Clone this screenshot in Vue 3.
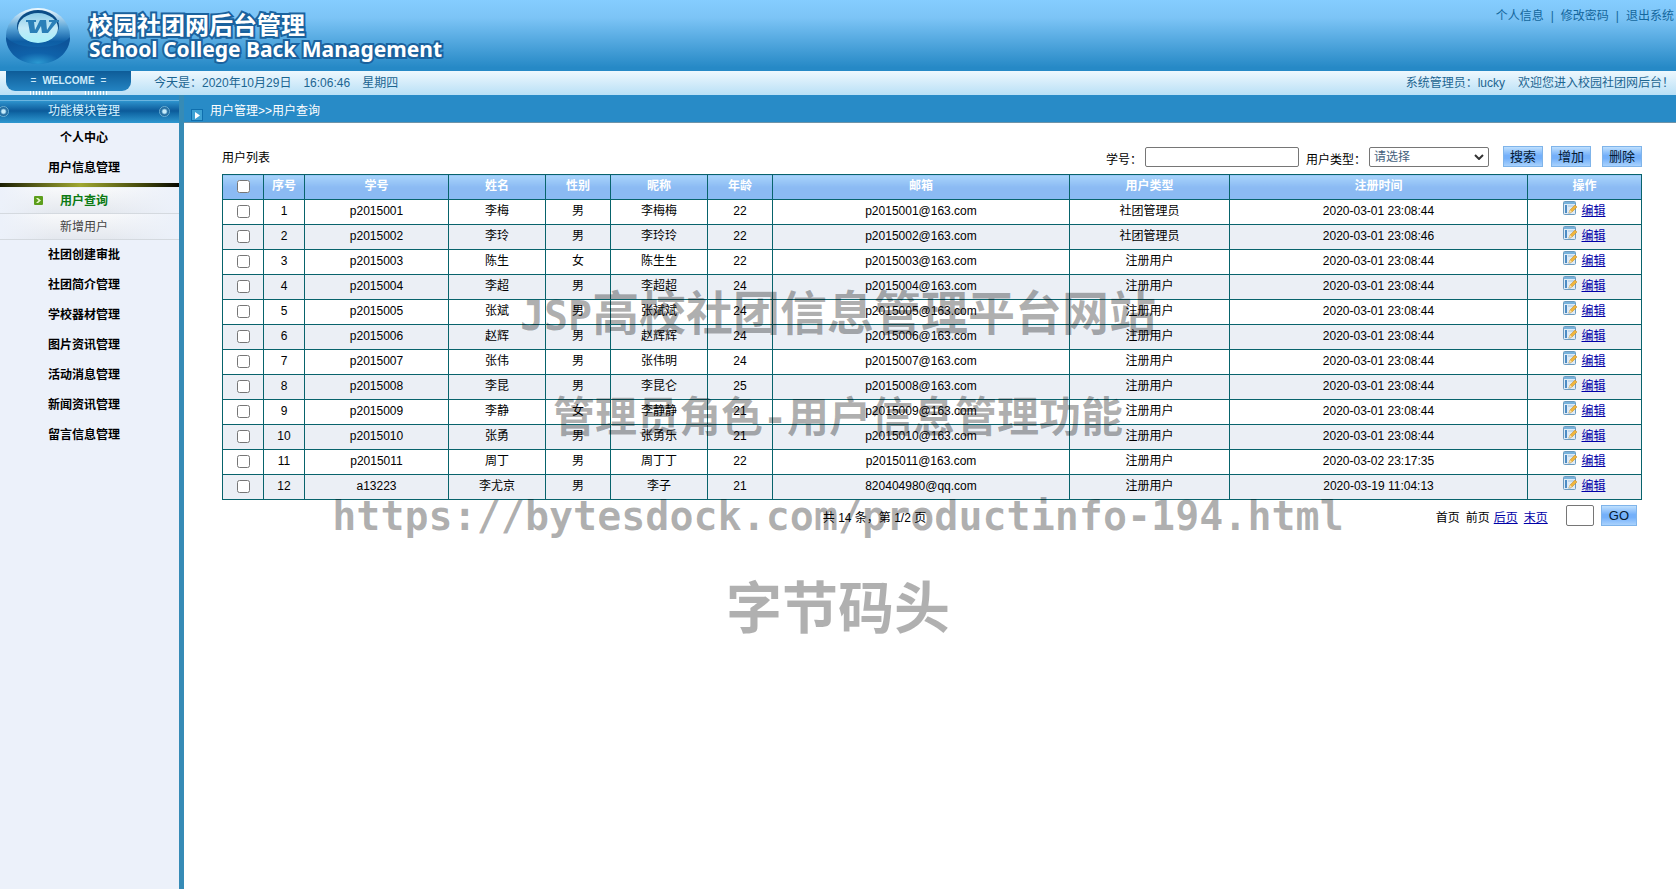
<script setup>
import { ref } from 'vue'

const sections = ['社团创建审批', '社团简介管理', '学校器材管理', '图片资讯管理', '活动消息管理', '新闻资讯管理', '留言信息管理']
const columns = ['序号', '学号', '姓名', '性别', '昵称', '年龄', '邮箱', '用户类型', '注册时间', '操作']
const widths = ['w-s', 'w-s', 'w-id', 'w-name', 'w-age', 'w-name', 'w-age', 'w-mail', 'w-type', 'w-time', 'w-op']

const users = [
  ['p2015001', '李梅', '男', '李梅梅', 22, 'p2015001@163.com', '社团管理员', '2020-03-01 23:08:44'],
  ['p2015002', '李玲', '男', '李玲玲', 22, 'p2015002@163.com', '社团管理员', '2020-03-01 23:08:46'],
  ['p2015003', '陈生', '女', '陈生生', 22, 'p2015003@163.com', '注册用户', '2020-03-01 23:08:44'],
  ['p2015004', '李超', '男', '李超超', 24, 'p2015004@163.com', '注册用户', '2020-03-01 23:08:44'],
  ['p2015005', '张斌', '男', '张斌斌', 24, 'p2015005@163.com', '注册用户', '2020-03-01 23:08:44'],
  ['p2015006', '赵辉', '男', '赵辉辉', 24, 'p2015006@163.com', '注册用户', '2020-03-01 23:08:44'],
  ['p2015007', '张伟', '男', '张伟明', 24, 'p2015007@163.com', '注册用户', '2020-03-01 23:08:44'],
  ['p2015008', '李昆', '男', '李昆仑', 25, 'p2015008@163.com', '注册用户', '2020-03-01 23:08:44'],
  ['p2015009', '李静', '女', '李静静', 21, 'p2015009@163.com', '注册用户', '2020-03-01 23:08:44'],
  ['p2015010', '张勇', '男', '张勇乐', 21, 'p2015010@163.com', '注册用户', '2020-03-01 23:08:44'],
  ['p2015011', '周丁', '男', '周丁丁', 22, 'p2015011@163.com', '注册用户', '2020-03-02 23:17:35'],
  ['a13223', '李尤京', '男', '李子', 21, '820404980@qq.com', '注册用户', '2020-03-19 11:04:13']
]

const keyword = ref('')
const userType = ref('')
const page = ref('')
</script>

<template>
  <div class="app">
    <header class="banner">
      <svg class="logo" viewBox="0 0 66 60" aria-hidden="true">
        <defs>
          <linearGradient id="rim" x1="0" y1="0" x2="0" y2="1">
            <stop offset="0" stop-color="#f2fbff" />
            <stop offset="0.35" stop-color="#5aa5d8" />
            <stop offset="0.6" stop-color="#0d5da4" />
            <stop offset="1" stop-color="#1c7cc0" />
          </linearGradient>
          <radialGradient id="ball" cx="0.5" cy="0.95" r="0.8">
            <stop offset="0" stop-color="#2b98d0" />
            <stop offset="0.45" stop-color="#0f62aa" />
            <stop offset="1" stop-color="#0d559b" />
          </radialGradient>
          <linearGradient id="glass" x1="0" y1="0" x2="0" y2="1">
            <stop offset="0" stop-color="#8ccbe8" />
            <stop offset="0.5" stop-color="#c3e9f7" />
            <stop offset="1" stop-color="#a5f0fa" />
          </linearGradient>
        </defs>
        <ellipse cx="32" cy="29" rx="32" ry="28" fill="url(#rim)" />
        <path d="M0 30C6 37 18 40 32 40s26-3 32-10c0 16-14 27-32 27S0 46 0 30z" fill="url(#ball)" />
        <ellipse cx="32" cy="19" rx="21" ry="16" fill="#0b4c86" />
        <ellipse cx="32" cy="21" rx="20" ry="15" fill="url(#glass)" />
        <path d="M20 13h10v2h-2l1 8 5-10h6l1 10 5-8h-3v-2h10v2h-2l-9 11h-6l-1-7-4 7h-7l-2-11h-2z" fill="#2a7fb8" />
      </svg>
      <div class="brand">
        <h1>校园社团网后台管理</h1>
        <p>School College Back Management</p>
      </div>
      <nav class="account">
        <a href="#">个人信息</a><span>|</span><a href="#">修改密码</a><span>|</span><a href="#">退出系统</a>
      </nav>
    </header>

    <div class="infobar">
      <div class="welcome"><span>=</span><b>WELCOME</b><span>=</span></div>
      <div class="clock"><span>今天是：2020年10月29日</span><span>16:06:46</span><span>星期四</span></div>
      <div class="greeting"><span>系统管理员：lucky</span><span>欢迎您进入校园社团网后台！</span></div>
    </div>

    <div class="body">
      <aside class="sidebar">
        <h2><i class="knob"></i><span>功能模块管理</span><i class="knob"></i></h2>
        <nav class="menu">
          <a class="item" href="#">个人中心</a>
          <a class="item" href="#">用户信息管理</a>
          <div class="submenu">
            <a class="sub active" href="#">
              <svg class="arrow" viewBox="0 0 9 9" aria-hidden="true">
                <rect width="9" height="9" rx="1" fill="#5c9e1c" />
                <path d="M2 2h2l3 2.500-3 2.500h-2l2.500-2.500z" fill="#e8f8c8" />
              </svg>用户查询</a>
            <a class="sub" href="#">新增用户</a>
          </div>
          <a v-for="s in sections" :key="s" class="item" href="#">{{ s }}</a>
        </nav>
      </aside>

      <main class="main">
        <div class="crumb">
          <svg viewBox="0 0 12 12" aria-hidden="true">
            <rect width="12" height="12" fill="#0f6fae" />
            <rect x="1" y="1" width="10" height="10" fill="#3ea2d4" />
            <path d="M4 3l5 3.500-5 3.500z" fill="#fff" />
          </svg>
          <span>用户管理&gt;&gt;用户查询</span>
        </div>

        <section class="content">
          <form class="toolbar" @submit.prevent>
            <span class="caption">用户列表</span>
            <label for="keyword">学号：</label>
            <input id="keyword" v-model="keyword" type="text">
            <label for="type" class="type-label">用户类型：</label>
            <select id="type" v-model="userType">
              <option value="">请选择</option>
              <option>社团管理员</option>
              <option>注册用户</option>
            </select>
            <div class="actions">
              <button type="submit">搜索</button>
              <button type="button">增加</button>
              <button type="button" class="remove">删除</button>
            </div>
          </form>

          <table>
            <colgroup><col v-for="(w, i) in widths" :key="i" :class="w"></colgroup>
            <thead>
              <tr>
                <th><input type="checkbox" aria-label="全选"></th>
                <th v-for="c in columns" :key="c">{{ c }}</th>
              </tr>
            </thead>
            <tbody>
              <tr v-for="(u, i) in users" :key="u[0]">
                <td><input type="checkbox" :aria-label="u[0]"></td>
                <td>{{ i + 1 }}</td>
                <td v-for="(v, j) in u" :key="j">{{ v }}</td>
                <td>
                  <div class="edit">
                    <svg viewBox="0 0 14 14" aria-hidden="true">
                      <rect x="0.500" y="0.500" width="12" height="13" rx="1" fill="#dfebf6" stroke="#6d9cc0" />
                      <path d="M1 2h11" stroke="#79b3dc" stroke-width="2" />
                      <path d="M3 4v8" stroke="#4d8cc4" stroke-width="2" />
                      <path d="M5 5h6M5 12h3" stroke="#9fc4e0" />
                      <path d="M6 12l1-3 5-5 2 2-5 5z" fill="#f0b63c" stroke="#b9862c" stroke-width="0.500" />
                      <path d="M6 12l1-3 2 2z" fill="#f6e3b8" />
                    </svg>
                    <a href="#">编辑</a>
                  </div>
                </td>
              </tr>
            </tbody>
          </table>

          <form class="pager" @submit.prevent>
            <span class="total">共 14 条，第 1/2 页</span>
            <div class="pages"><span>首页</span><span>前页</span><a href="#">后页</a><a href="#" class="last">末页</a></div>
            <input v-model="page" type="text" aria-label="页码">
            <button type="submit">GO</button>
          </form>
        </section>
      </main>
    </div>

    <div class="watermark">
      <p class="mark-title"><span>JSP</span>高校社团信息管理平台网站</p>
      <p class="mark-role">管理员角色<span>-</span>用户信息管理功能</p>
      <p class="mark-url">https://bytesdock.com/productinfo-194.html</p>
      <p class="mark-name">字节码头</p>
    </div>
  </div>
</template>

<style>
body { background: #fff; }
</style>

<style scoped>
.app {
  position: relative;
  display: flex;
  flex-direction: column;
  min-height: 100vh;
  font: 12px/16px "Liberation Sans", "Noto Sans CJK SC", sans-serif;
  color: #000;
}
* { box-sizing: border-box; }
h1, h2, p { margin: 0; }
a { color: inherit; text-decoration: none; }

.banner {
  display: flex;
  height: 71px;
  padding: 7px 2px 0 6px;
  background: linear-gradient(#85cdff, #7cc4f6 25%, #2689c6 95%);
}
.logo { width: 66px; height: 60px; }
.brand {
  flex: 1;
  padding-left: 17px;
  color: #fff;
  paint-order: stroke fill;
  -webkit-text-stroke: 4px #1a629e;
}
.brand h1 { font: bold 24px/34px "Noto Sans CJK SC", sans-serif; }
.brand p { font: bold 21px/16px "Noto Sans", sans-serif; }
.account { display: flex; gap: 7px; padding-top: 1px; color: #14679d; }

.infobar {
  display: flex;
  height: 24px;
  padding: 0 2px 0 6px;
  line-height: 25px;
  color: #1c6591;
  background: linear-gradient(#eef8fe, #b9e0f6);
}
.welcome {
  position: relative;
  display: flex;
  justify-content: center;
  gap: 6px;
  width: 125px;
  height: 20px;
  border-radius: 0 0 9px 9px;
  font-size: 10px;
  line-height: 20px;
  color: #cdebfb;
  background: linear-gradient(#0e5c98, #2484c2);
}
.welcome::before, .welcome::after {
  content: "";
  position: absolute;
  top: 20px;
  left: 24px;
  width: 22px;
  height: 4px;
  background: repeating-linear-gradient(90deg, #fff 0 1px, #9fcfe9 1px 3px);
}
.welcome::after { left: 79px; }
.clock { display: flex; flex: 1; gap: 12px; padding-left: 23px; }
.greeting { display: flex; gap: 13px; }

.body { display: flex; flex: 1; }
.sidebar {
  width: 184px;
  flex-shrink: 0;
  padding-top: 5px;
  border-right: 5px solid #368bb6;
  background: linear-gradient(#288bc7 5px, #ecf1fa 5px);
}
.sidebar h2 {
  display: flex;
  align-items: center;
  justify-content: space-between;
  height: 23px;
  padding: 0 9px 2px 0;
  border-top: 1px solid #6ab5e0;
  font-size: 12px;
  font-weight: normal;
  line-height: 20px;
  color: #d8f3ff;
  background: linear-gradient(#2e93cd, #0c5a9a 45%, #1168a6 55%, #2f98d0);
}
.knob {
  width: 11px;
  height: 11px;
  border: 1px solid #6aaed2;
  border-radius: 50%;
  background: radial-gradient(#c7ecfb 25%, #2a75a8 50%, #0f4a80);
}
.knob:first-child { margin-left: -2px; }
.menu { display: flex; flex-direction: column; }
.item { padding-right: 11px; font-weight: bold; line-height: 30px; text-align: center; }
.submenu {
  border-top: 5px solid #111;
  border-image: linear-gradient(90deg, #141600, #a0a832 45%, #3c4008 80%, #000) 4;
  border-image-width: 4px 0 0;
}
.sub {
  display: block;
  position: relative;
  height: 26px;
  padding-right: 11px;
  border-bottom: 1px solid #d4d9df;
  line-height: 26px;
  text-align: center;
  color: #444;
  background: linear-gradient(90deg, #ecf1fa, transparent 30%, transparent 60%, #ecf1fa), linear-gradient(#f8f9fb, #e4e8ee);
}
.sub.active { font-weight: bold; color: #0b7a12; }
.arrow { position: absolute; top: 8px; left: 34px; width: 9px; height: 9px; }

.main { flex: 1; min-width: 0; }
.crumb {
  display: flex;
  gap: 7px;
  height: 28px;
  padding-left: 7px;
  border-bottom: 1px solid #6f93a8;
  line-height: 32px;
  color: #fff;
  background: #288bc7;
}
.crumb svg { width: 12px; height: 12px; margin-top: 14px; }
.content { padding: 23px 34px 0 38px; }

.toolbar { display: flex; align-items: flex-end; height: 28px; padding-bottom: 7px; }
.caption { flex: 1; line-height: 18px; }
.toolbar label { line-height: 14px; }
input[type="text"], select {
  height: 20px;
  border: 1px solid #767676;
  border-radius: 2px;
  font: inherit;
  background-color: #fff;
}
#keyword { width: 154px; margin-left: 3px; }
.type-label { margin-left: 7px; }
select {
  appearance: none;
  width: 120px;
  margin-left: 3px;
  padding: 0 4px;
  line-height: 18px;
  color: #44617c;
  background: #fff url("data:image/svg+xml,%3Csvg xmlns='http://www.w3.org/2000/svg' viewBox='0 0 10 6'%3E%3Cpath d='M1 1l4 4 4-4' fill='none' stroke='%23333' stroke-width='2'/%3E%3C/svg%3E") no-repeat right 4px center / 10px 6px;
}
.actions { display: flex; gap: 8px; margin-left: 14px; }
button {
  height: 21px;
  padding: 0 6px;
  border: 1px solid #7fb4ea;
  font: 13px/19px "Liberation Sans", "Noto Sans CJK SC", sans-serif;
  color: #061a33;
  background: linear-gradient(#bfe0fe, #74b0fa 45%, #74b0fa 60%, #a9d2fd);
}
.remove { margin-left: 3px; }

table { width: 100%; table-layout: fixed; border-collapse: collapse; }
.w-s { width: 41px; }
.w-id { width: 144px; }
.w-name { width: 97px; }
.w-age { width: 65px; }
.w-mail { width: 297px; }
.w-type { width: 160px; }
.w-time { width: 298px; }
.w-op { width: 114px; }
th, td { height: 25px; padding: 0 0 3px; border: 1px solid #08636c; line-height: 20px; text-align: center; white-space: nowrap; }
th { color: #fff; background: linear-gradient(#a8d4fb, #8bbaf3 50%, #8bbaf3); }
tbody tr:nth-child(even) { background: #ebeff5; }
th:first-child, td:first-child { padding: 0 0 1px; }
input[type="checkbox"] { display: block; width: 13px; height: 13px; margin: 0 auto; }
.edit { display: flex; justify-content: center; gap: 4px; }
.edit svg { width: 14px; height: 14px; }
.edit a, .pages a { color: #0000a8; text-decoration: underline; }

.pager { display: grid; grid-template-columns: 1fr auto auto auto; align-items: center; position: relative; padding: 5px 5px 0 0; }
.total { position: absolute; top: 10px; left: 0; right: 115px; text-align: center; }
.pages { grid-column: 2; display: flex; gap: 6px; padding-top: 5px; }
.pages a { margin-left: -2px; }
.pages .last { margin-left: 0; }
.pager input[type="text"] { width: 28px; height: 21px; margin: 0 7px 0 18px; }
.pager button { padding: 0 7px; }

.watermark {
  position: absolute;
  top: 260px;
  left: 0;
  right: 0;
  font-family: "Noto Sans CJK SC", sans-serif;
  font-weight: bold;
  text-align: center;
  color: rgba(0, 0, 0, 0.31);
  pointer-events: none;
}
.watermark span, .mark-url { font-family: "DejaVu Sans Mono", monospace; font-size: 40px; }
.mark-title { font-size: 47px; line-height: 100px; }
.mark-role { font-size: 42px; line-height: 96px; }
.mark-url { line-height: 100px; }
.mark-name { font-size: 56px; line-height: 76px; }
</style>
